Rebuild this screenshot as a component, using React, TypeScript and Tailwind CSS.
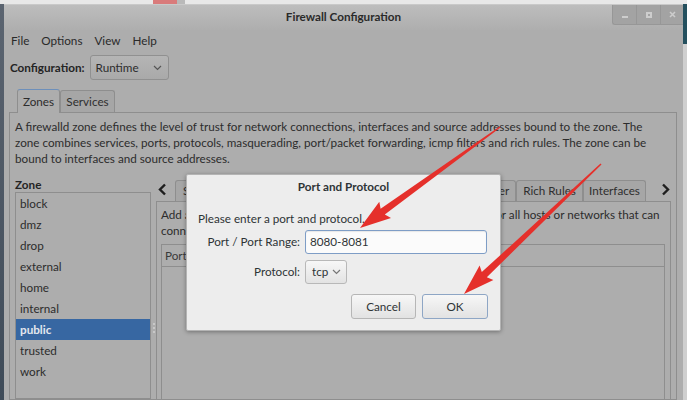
import React from "react";

type Pt = [number, number];

// tapered red arrow, like the ones screenshot tools draw
function arrowPoints(tail: Pt, tip: Pt) {
  const dx = tip[0] - tail[0];
  const dy = tip[1] - tail[1];
  const len = Math.hypot(dx, dy);
  const ux = dx / len;
  const uy = dy / len;
  const nx = -uy;
  const ny = ux;
  const head = 28;
  const wing = 10;
  const s0 = 0.7;
  const s1 = 3.6;
  const bx = tip[0] - ux * head;
  const by = tip[1] - uy * head;
  const wx = tip[0] - ux * (head + 3);
  const wy = tip[1] - uy * (head + 3);
  const pts: Pt[] = [
    [tail[0] + nx * s0, tail[1] + ny * s0],
    [bx + nx * s1, by + ny * s1],
    [wx + nx * wing, wy + ny * wing],
    tip,
    [wx - nx * wing, wy - ny * wing],
    [bx - nx * s1, by - ny * s1],
    [tail[0] - nx * s0, tail[1] - ny * s0],
  ];
  return pts.map((p) => `${p[0].toFixed(1)},${p[1].toFixed(1)}`).join(" ");
}

const zones = ["block", "dmz", "drop", "external", "home", "internal", "public", "trusted", "work"];

function ChevronDown({ className }: { className?: string }) {
  return (
    <svg width="9" height="6" viewBox="0 0 9 6" className={className}>
      <path d="M1 1 L4.5 4.5 L8 1" fill="none" stroke="currentColor" strokeWidth="1.2" />
    </svg>
  );
}

function Arrow({ dir }: { dir: "left" | "right" }) {
  return (
    <svg width="9" height="13" viewBox="0 0 9 13">
      <path
        d={dir === "left" ? "M7 1.5 L2 6.5 L7 11.5" : "M2 1.5 L7 6.5 L2 11.5"}
        fill="none"
        stroke="#1e1e1e"
        strokeWidth="2.4"
      />
    </svg>
  );
}

function Tab({ children, className = "" }: { children: React.ReactNode; className?: string }) {
  return (
    <div
      className={`h-[21px] shrink-0 whitespace-nowrap flex items-center justify-center px-[7px] border border-b-0 border-[#8e8e8e] rounded-t-[3px] bg-[#a6a6a6] text-[#2f2f2f] ${className}`}
    >
      {children}
    </div>
  );
}

function TitleBar() {
  return (
    <div className="h-[26px] grid grid-cols-[1fr_auto_1fr] items-start bg-gradient-to-b from-[#bdbdbd] to-[#aeaeae] border-t border-[#c9c9c9]">
      <div />
      <div className="pt-[3px] font-bold text-[#2a2a2a] whitespace-nowrap">Firewall Configuration</div>
      <div className="flex justify-end">
        <div className="flex h-[20px] rounded-bl-[3px] overflow-hidden border-l border-b border-[#979797] bg-[#a3a3a3]">
          <div className="w-[23px] flex items-end justify-center pb-[6px]">
            <div className="w-[6px] h-[2px] bg-[#cdcdcd]" />
          </div>
          <div className="w-[24px] flex items-center justify-center border-l border-[#979797]">
            <div className="w-[6px] h-[6px] border-[2px] border-[#cdcdcd]" />
          </div>
          <div className="w-[23px] flex items-center justify-center border-l border-[#979797]">
            <svg width="7" height="7" viewBox="0 0 7 7">
              <path d="M1 1 L6 6 M6 1 L1 6" stroke="#cdcdcd" strokeWidth="1.6" />
            </svg>
          </div>
        </div>
      </div>
    </div>
  );
}

function ZoneList() {
  return (
    <div className="w-[136px] shrink-0 flex flex-col">
      <div className="h-[16px] leading-[16px] font-bold text-[#242424]">Zone</div>
      <div className="flex-1 border border-[#8e8e8e] bg-[#adadad]">
        {zones.map((z) =>
          z === "public" ? (
            <div key={z} className="h-[21px] leading-[21px] pl-[4px] bg-[#3767a2] font-bold text-[#e4e8ee]">
              {z}
            </div>
          ) : (
            <div key={z} className="h-[21px] leading-[21px] pl-[4px] text-[#2c2c2c]">
              {z}
            </div>
          )
        )}
      </div>
    </div>
  );
}

function ZoneSettings() {
  return (
    <div className="flex-1 min-w-0 flex flex-col pt-[2px]">
      <div className="h-[24px] flex items-end">
        <div className="w-[19px] h-full shrink-0 flex items-center pl-[2px]">
          <Arrow dir="left" />
        </div>
        <div className="flex-1 min-w-0 flex items-end overflow-hidden">
          <Tab>Services</Tab>
          <Tab className="bg-[#adadad] h-[23px]">Ports</Tab>
          <Tab>Protocols</Tab>
          <Tab>Source Ports</Tab>
        </div>
        <div className="flex items-end shrink-0">
          <Tab className="w-[72px]">ICMP Filter</Tab>
          <Tab className="w-[67px]">Rich Rules</Tab>
          <Tab className="w-[63px]">Interfaces</Tab>
        </div>
        <div className="w-[25px] h-full shrink-0 flex items-center justify-end pr-[1px]">
          <Arrow dir="right" />
        </div>
      </div>
      <div className="flex-1 border border-[#8e8e8e] px-[4px] pt-[4px]">
        <div className="leading-[16px] text-[#2c2c2c] whitespace-nowrap">
          Add additional ports or port ranges, which need to be accessible for all hosts or networks that can
          <br />
          connect to the zone.
        </div>
        <div className="mt-[6px] h-[200px] mr-[1px] border border-[#8e8e8e]">
          <div className="h-[22px] flex items-center pl-[3px] border-b border-[#8e8e8e] text-[#3a3a3a]">
            <span className="w-[120px]">Port</span>
            <span>Protocol</span>
          </div>
        </div>
      </div>
    </div>
  );
}

function MainWindow() {
  return (
    <div className="flex-1 min-w-0 flex flex-col bg-[#adadad]">
      <TitleBar />
      <div className="h-[22px] flex items-center pl-[7px] gap-[12px] text-[#2a2a2a]">
        <span>File</span>
        <span>Options</span>
        <span>View</span>
        <span>Help</span>
      </div>
      <div className="flex items-center pl-[6px] pt-[3px] gap-[5px]">
        <span className="font-bold text-[#242424]">Configuration:</span>
        <div className="w-[79px] h-[25px] flex items-center justify-between pl-[5px] pr-[6px] rounded-[3px] border border-[#909090] bg-gradient-to-b from-[#b5b5b5] to-[#a9a9a9] text-[#2c2c2c]">
          <span>Runtime</span>
          <ChevronDown className="text-[#555]" />
        </div>
      </div>
      <div className="flex items-end pl-[13px] mt-[8px] h-[24px]">
        <div className="relative z-10 h-[24px] w-[43px] -mb-px flex items-center justify-center border border-b-0 border-[#8e8e8e] border-t-[#6d8fba] rounded-t-[3px] bg-[#adadad] text-[#2c2c2c]">
          Zones
        </div>
        <Tab className="w-[55px] h-[22px]">Services</Tab>
      </div>
      <div className="flex-1 min-h-0 ml-[5px] mr-[6px] border border-[#8e8e8e] pl-[5px] pr-[5px] pt-[5px] flex flex-col">
        <p className="leading-[16px] text-[#2c2c2c] whitespace-nowrap">
          A firewalld zone defines the level of trust for network connections, interfaces and source addresses bound to
          the zone. The
          <br />
          zone combines services, ports, protocols, masquerading, port/packet forwarding, icmp filters and rich rules.
          The zone can be
          <br />
          bound to interfaces and source addresses.
        </p>
        <div className="flex-1 min-h-0 mt-[10px] flex">
          <ZoneList />
          <div className="w-[5px] shrink-0 flex flex-col items-center justify-center gap-[2px] pt-[80px]">
            <div className="w-[2px] h-[2px] bg-[#c8c8c8]" />
            <div className="w-[2px] h-[2px] bg-[#c8c8c8]" />
            <div className="w-[2px] h-[2px] bg-[#c8c8c8]" />
          </div>
          <ZoneSettings />
        </div>
      </div>
    </div>
  );
}

function PortDialog() {
  return (
    <div className="absolute left-[186px] top-[174px] w-[315px] h-[157px] bg-[#ededed] border border-[#b4b4b4] rounded-[2px] shadow-[0_1px_4px_rgba(0,0,0,0.35)] flex flex-col text-[#2e3436]">
      <div className="h-[23px] flex items-center justify-center font-bold">Port and Protocol</div>
      <div className="px-[11px] pt-[12px] flex flex-col">
        <div className="leading-[16px]">Please enter a port and protocol.</div>
        <div className="grid grid-cols-[102px_1fr] gap-x-[5px] gap-y-[6px] items-center mt-[4px]">
          <div className="text-right whitespace-nowrap">Port / Port Range:</div>
          <div className="h-[24px] w-[182px] flex items-center pl-[4px] rounded-[3px] border border-[#7e9dc6] bg-[#fbfbfb] shadow-[inset_0_1px_1px_rgba(0,0,0,0.08)]">
            8080-8081
          </div>
          <div className="text-right">Protocol:</div>
          <div className="h-[24px] w-[42px] flex items-center justify-between pl-[6px] pr-[5px] rounded-[3px] border border-[#b8b8b8] bg-gradient-to-b from-[#f7f7f7] to-[#e3e3e3]">
            <span>tcp</span>
            <ChevronDown className="text-[#777]" />
          </div>
        </div>
        <div className="flex justify-end gap-[6px] mt-[10px] pr-[1px]">
          <div className="w-[65px] h-[25px] flex items-center justify-center rounded-[3px] border border-[#b6b6b6] bg-gradient-to-b from-[#f7f7f7] to-[#e2e2e2]">
            Cancel
          </div>
          <div className="w-[66px] h-[25px] flex items-center justify-center rounded-[3px] border border-[#8ea6c5] bg-gradient-to-b from-[#f7f7f7] to-[#e2e2e2]">
            OK
          </div>
        </div>
      </div>
    </div>
  );
}

export default function App() {
  return (
    <div className="relative w-[687px] h-[400px] overflow-hidden flex flex-col bg-[#e8e8e8] font-['Lato',sans-serif] text-[11.7px]">
      <div className="h-[4px] shrink-0 flex">
        <div className="w-[153px]" />
        <div className="w-[24px] bg-[#d97b7b]" />
        <div className="w-[8px] bg-[#b9b9b9]" />
      </div>
      <div className="flex-1 min-h-0 flex">
        <div className="w-[4px] shrink-0 bg-gradient-to-b from-[#5b6470] to-[#3f4b58]" />
        <MainWindow />
        <div className="w-[4px] shrink-0 flex flex-col">
          <div className="h-[40px] bg-[#24505e]" />
          <div className="flex-1 bg-[#cfcfcf]" />
        </div>
      </div>
      <PortDialog />
      <svg className="absolute inset-0 pointer-events-none" width="687" height="400">
        <polygon points={arrowPoints([500, 127], [360, 228])} fill="#e5302b" />
        <polygon points={arrowPoints([601, 164], [464, 294])} fill="#e5302b" />
      </svg>
    </div>
  );
}
